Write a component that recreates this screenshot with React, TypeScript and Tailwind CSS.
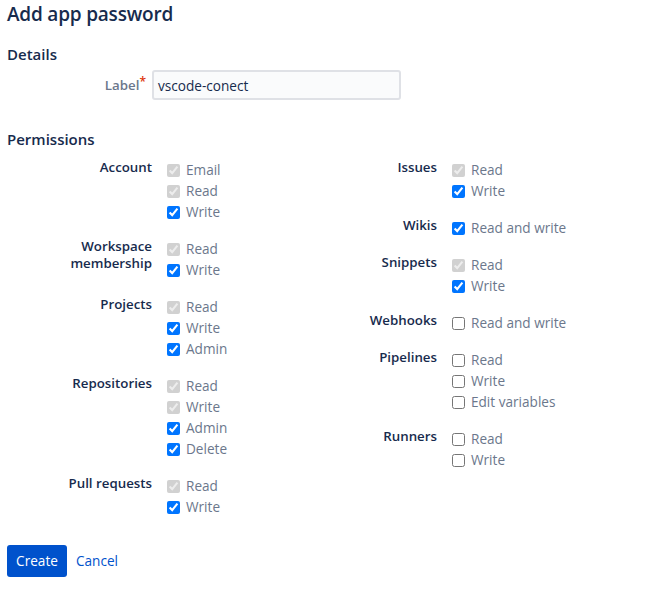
import React from "react";

type Opt = { label: string; state: "disabled" | "checked" | "unchecked" };
type Group = { name: string[]; opts: Opt[] };

const D = (label: string): Opt => ({ label, state: "disabled" });
const C = (label: string): Opt => ({ label, state: "checked" });
const U = (label: string): Opt => ({ label, state: "unchecked" });

const left: Group[] = [
  { name: ["Account"], opts: [D("Email"), D("Read"), C("Write")] },
  { name: ["Workspace", "membership"], opts: [D("Read"), C("Write")] },
  { name: ["Projects"], opts: [D("Read"), C("Write"), C("Admin")] },
  { name: ["Repositories"], opts: [D("Read"), D("Write"), C("Admin"), C("Delete")] },
  { name: ["Pull requests"], opts: [D("Read"), C("Write")] },
];

const right: Group[] = [
  { name: ["Issues"], opts: [D("Read"), C("Write")] },
  { name: ["Wikis"], opts: [C("Read and write")] },
  { name: ["Snippets"], opts: [D("Read"), C("Write")] },
  { name: ["Webhooks"], opts: [U("Read and write")] },
  { name: ["Pipelines"], opts: [U("Read"), U("Write"), U("Edit variables")] },
  { name: ["Runners"], opts: [U("Read"), U("Write")] },
];

function GroupView({ g }: { g: Group }) {
  return (
    <div className="flex mb-[16px]">
      <div className="w-[145px] shrink-0 -mt-[1px] text-right text-[13.3px] leading-[17px] font-semibold text-[#172b4d]">
        {g.name.map((n) => (
          <div key={n}>{n}</div>
        ))}
      </div>
      <div className="flex flex-col pl-[15px]">
        {g.opts.map((o) => (
          <label key={o.label} className="flex items-center h-[21px]">
            <input
              type="checkbox"
              className="m-0 w-[13px] h-[13px]"
              checked={o.state !== "unchecked"}
              disabled={o.state === "disabled"}
              readOnly
            />
            <span className="ml-[6px] text-[13.6px] text-[#6b778c]">{o.label}</span>
          </label>
        ))}
      </div>
    </div>
  );
}

export default function App() {
  return (
    <div
      className="w-[653px] h-[602px] bg-white px-[7px]"
      style={{ fontFamily: '"Open Sans", "Noto Sans", sans-serif' }}
    >
      <h1 className="text-[19px] leading-[28px] font-semibold tracking-[-0.2px] text-[#172b4d]">Add app password</h1>
      <h2 className="mt-[16px] text-[15px] leading-[20px] font-semibold text-[#172b4d]">Details</h2>
      <div className="mt-[6px] flex items-center">
        <div className="w-[145px] shrink-0 text-right text-[13.3px] font-semibold text-[#6b778c] pr-[6px] pt-[1px]">
          Label<span className="text-[#de350b] align-top text-[12px] leading-[12px]">*</span>
        </div>
        <div className="w-[249px] h-[30px] border-2 border-[#dfe1e6] bg-[#fafbfc] rounded-[3px] flex items-center px-[4px] pt-[2px] text-[13.6px] text-[#172b4d]">
          vscode-conect
        </div>
      </div>
      <h2 className="mt-[29px] text-[15px] leading-[20px] font-semibold text-[#172b4d]">Permissions</h2>
      <div className="mt-[11px] grid grid-cols-[285px_285px]">
        <div>
          {left.map((g) => (
            <GroupView key={g.name.join()} g={g} />
          ))}
        </div>
        <div>
          {right.map((g) => (
            <GroupView key={g.name.join()} g={g} />
          ))}
        </div>
      </div>
      <div className="mt-[11px] flex items-center gap-[9px]">
        <button className="h-[32px] w-[60px] rounded-[3px] bg-[#0052cc] text-white text-[13.6px]">Create</button>
        <button className="text-[13.6px] text-[#0052cc]">Cancel</button>
      </div>
    </div>
  );
}
